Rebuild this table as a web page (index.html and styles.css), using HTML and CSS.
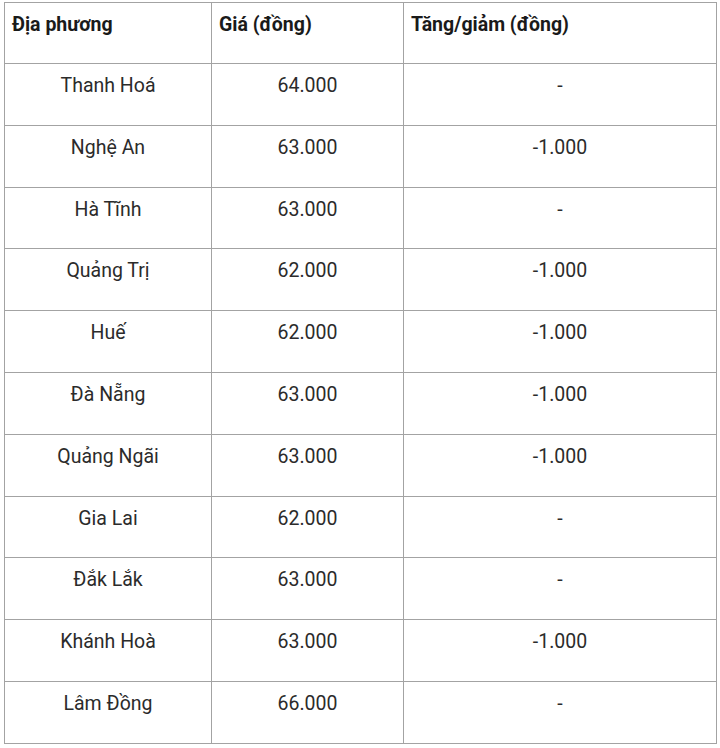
FILE: index.html
```html
<!DOCTYPE html>
<html lang="vi">
<head>
<meta charset="utf-8">
<title>Giá heo hơi</title>
<link rel="stylesheet" href="styles.css">
</head>
<body>
<div class="wrap">
<table class="price-table">
  <colgroup>
    <col class="c1"><col class="c2"><col class="c3">
  </colgroup>
  <thead>
    <tr class="head"><th>Địa phương</th><th>Giá (đồng)</th><th>Tăng/giảm (đồng)</th></tr>
  </thead>
  <tbody>
    <tr><td>Thanh Hoá</td><td>64.000</td><td>-</td></tr>
    <tr><td>Nghệ An</td><td>63.000</td><td>-1.000</td></tr>
    <tr><td>Hà Tĩnh</td><td>63.000</td><td>-</td></tr>
    <tr><td>Quảng Trị</td><td>62.000</td><td>-1.000</td></tr>
    <tr><td>Huế</td><td>62.000</td><td>-1.000</td></tr>
    <tr><td>Đà Nẵng</td><td>63.000</td><td>-1.000</td></tr>
    <tr><td>Quảng Ngãi</td><td>63.000</td><td>-1.000</td></tr>
    <tr><td>Gia Lai</td><td>62.000</td><td>-</td></tr>
    <tr><td>Đắk Lắk</td><td>63.000</td><td>-</td></tr>
    <tr><td>Khánh Hoà</td><td>63.000</td><td>-1.000</td></tr>
    <tr><td>Lâm Đồng</td><td>66.000</td><td>-</td></tr>
  </tbody>
</table>
</div>
</body>
</html>
```

FILE: styles.css
```css
html, body {
  margin: 0;
  padding: 0;
  background: #ffffff;
}

.wrap {
  padding: 2px 0 0 4px;
}

.price-table {
  border-collapse: collapse;
  width: 712px;
  table-layout: fixed;
  font-family: Roboto, "Noto Sans", sans-serif;
  font-size: 19.5px;
  color: #222222;
}

.c1 { width: 207px; }
.c2 { width: 192px; }
.c3 { width: 313px; }

.price-table th,
.price-table td {
  border: 1px solid #a3a3a3;
  padding: 10px 7px 0 7px;
  vertical-align: top;
  line-height: 23px;
}

.price-table th {
  text-align: left;
  font-weight: 700;
  color: #1a1a1a;
}

.price-table td {
  text-align: center;
  color: #2b2b2b;
}

.head {
  height: 61px;
}

.price-table tbody tr {
  height: 61.8px;
}
```
